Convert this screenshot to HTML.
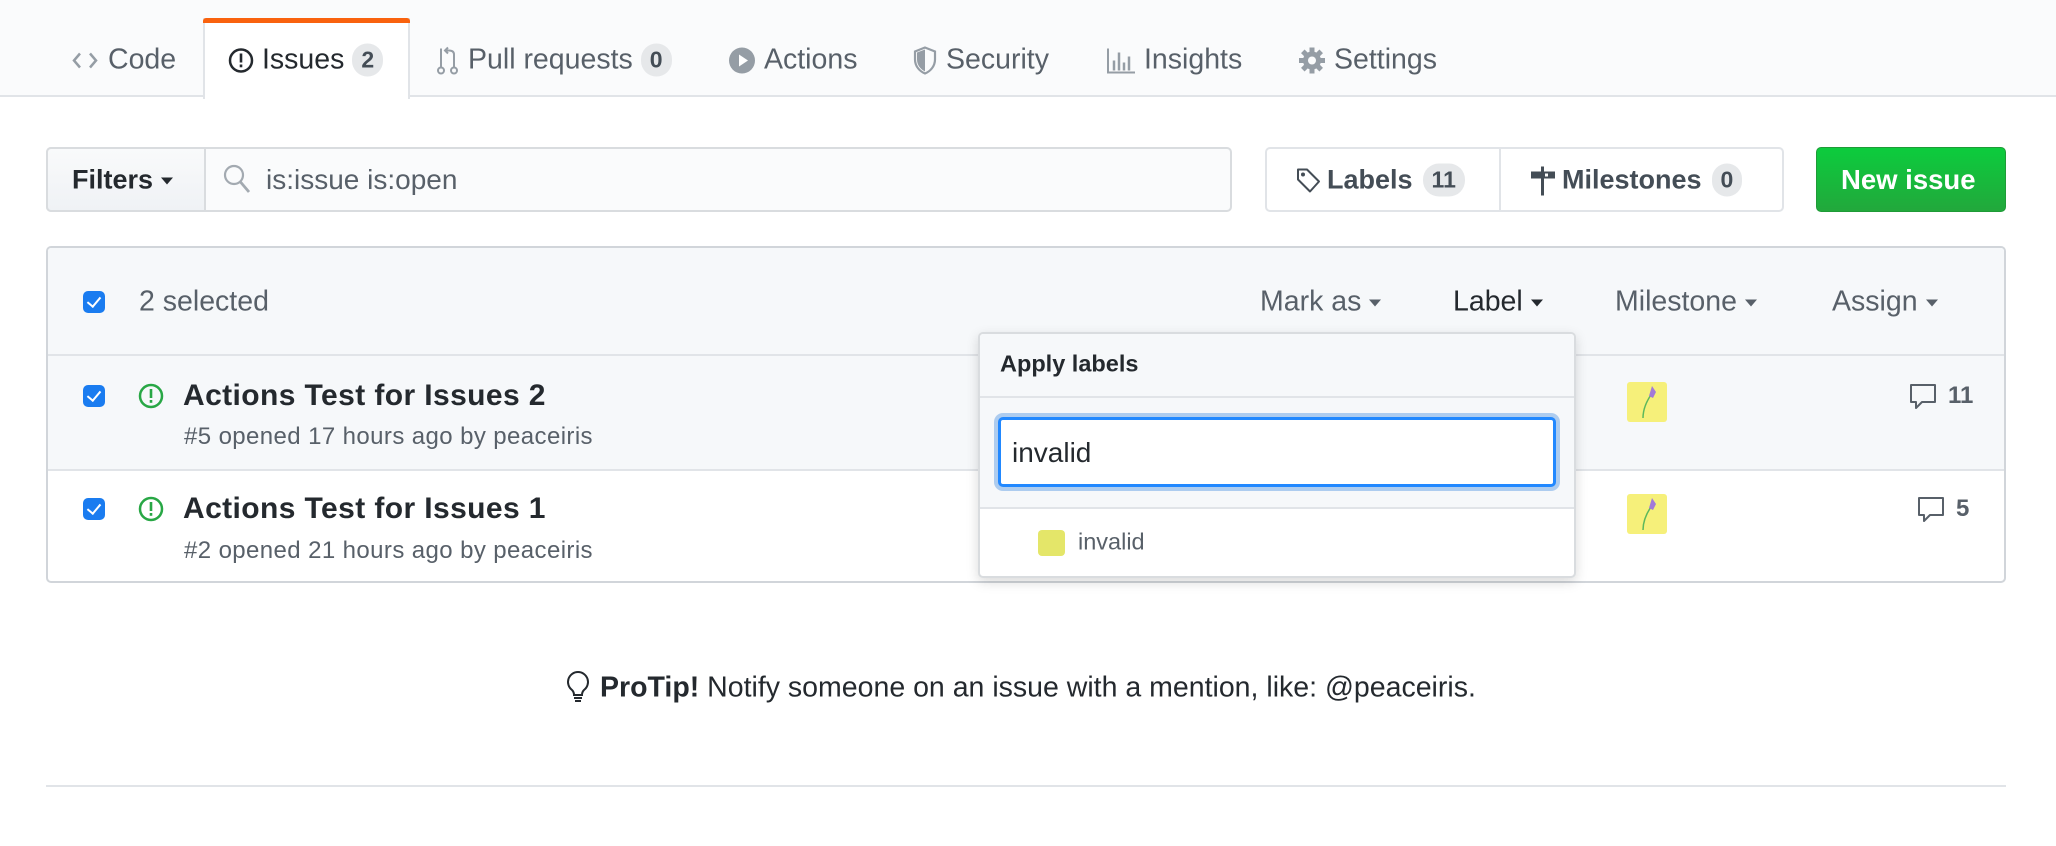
<!DOCTYPE html>
<html><head><meta charset="utf-8"><style>
*{box-sizing:border-box;margin:0;padding:0}
body{width:2056px;height:846px;background:#fff;font-family:"Liberation Sans",sans-serif;position:relative;overflow:hidden;color:#24292e}
.a{position:absolute;white-space:nowrap}
.tabbar{position:absolute;left:0;top:0;width:2056px;height:97px;background:#fafbfc;border-bottom:2px solid #e1e4e8}
.tab{position:absolute;top:60px;transform:translateY(-50%);font-size:28.5px;color:#586069;display:flex;align-items:center}
.cnt{display:inline-block;background:#e6e8ea;border-radius:16px;font-size:23px;font-weight:bold;color:#444d56;padding:3px 9px;margin-left:8px}
svg{display:block}
.mid{transform:translateY(-50%)}
.cb{position:absolute;width:22px;height:22px;background:#1a7cf0;border-radius:5px}
.cb:after{content:"";position:absolute;left:7px;top:3px;width:6px;height:11px;border:solid #fff;border-width:0 2.5px 2.5px 0;transform:rotate(40deg)}
.car{display:inline-block;border:6px solid transparent;border-top:7px solid #586069;border-bottom:0;margin-left:8px;vertical-align:middle}
</style></head><body>
<div class="tabbar"></div>
<div class="a" style="left:203px;top:18px;width:207px;height:81px;background:#fff;border:2px solid #e1e4e8;border-top:0;border-bottom:0"></div>
<div class="a" style="left:203px;top:18px;width:207px;height:5px;background:#f9620e;border-radius:3px 3px 0 0"></div>

<div class="tab" style="left:72px"><svg width="26" height="22" viewBox="0 0 26 22"><path d="M8 4 2 11l6 7M18 4l6 7-6 7" stroke="#959da5" stroke-width="2.5" fill="none"/></svg><span style="margin-left:10px;color:#586069">Code</span></div>
<div class="tab" style="left:228px;color:#24292e"><svg width="26" height="26" viewBox="0 0 26 26"><circle cx="13" cy="13" r="11" stroke="#24292e" stroke-width="2.5" fill="none"/><rect x="11.7" y="6" width="2.6" height="9" fill="#24292e"/><rect x="11.7" y="17" width="2.6" height="2.8" fill="#24292e"/></svg><span style="margin-left:8px">Issues</span><span class="cnt">2</span></div>
<div class="tab" style="left:436px"><svg width="24" height="30" viewBox="0 0 24 30"><circle cx="5" cy="25" r="3" stroke="#959da5" stroke-width="2" fill="none"/><path d="M5 3v19M18 22V9c0-3-2-4-5-4h-3M12 2 9 5l3 3" stroke="#959da5" stroke-width="2" fill="none"/><circle cx="18" cy="25" r="3" stroke="#959da5" stroke-width="2" fill="none"/></svg><span style="margin-left:8px">Pull requests</span><span class="cnt">0</span></div>
<div class="tab" style="left:728px"><svg width="28" height="28" viewBox="0 0 28 28"><circle cx="14" cy="14" r="13" fill="#959da5"/><path d="M11 8v12l9-6z" fill="#fff"/></svg><span style="margin-left:8px">Actions</span></div>
<div class="tab" style="left:912px"><svg width="26" height="30" viewBox="0 0 26 30"><path d="M13 2 3 6v8c0 7 5 12 10 14 5-2 10-7 10-14V6z" stroke="#959da5" stroke-width="2.2" fill="none"/><path d="M13 4v22c-4-2-8-6-8-12V7z" fill="#959da5"/></svg><span style="margin-left:8px">Security</span></div>
<div class="tab" style="left:1106px"><svg width="30" height="28" viewBox="0 0 30 28"><path d="M2 2v24h27" stroke="#959da5" stroke-width="2" fill="none"/><path d="M8 24V14M13 24V6M18 24V16M23 24V10" stroke="#959da5" stroke-width="2.5"/></svg><span style="margin-left:8px">Insights</span></div>
<div class="tab" style="left:1298px"><svg width="28" height="28" viewBox="0 0 28 28"><circle cx="14" cy="14" r="9" fill="#959da5"/><g stroke="#959da5" stroke-width="5"><path d="M14 1v26M1 14h26M4.8 4.8l18.4 18.4M23.2 4.8 4.8 23.2"/></g><circle cx="14" cy="14" r="4" fill="#fafbfc"/></svg><span style="margin-left:8px">Settings</span></div>

<!-- filters -->
<div class="a" style="left:46px;top:147px;width:1186px;height:65px;border:2px solid #d9dcdf;border-radius:5px;background:#fafbfc"></div>
<div class="a" style="left:46px;top:147px;width:160px;height:65px;border:2px solid #d9dcdf;border-radius:5px 0 0 5px;background:linear-gradient(#f9fafb,#eff2f5)"></div>
<div class="a mid" style="left:72px;top:180px;font-size:27px;font-weight:bold;color:#24292e">Filters<span class="car" style="border-top-color:#24292e"></span></div>
<svg class="a" style="left:222px;top:163px" width="30" height="32" viewBox="0 0 30 32"><circle cx="12" cy="12" r="9" stroke="#a3aab1" stroke-width="2.2" fill="none"/><path d="M18.5 19 27 29" stroke="#a3aab1" stroke-width="2.8"/></svg>
<div class="a mid" style="left:266px;top:180px;font-size:28px;color:#586069">is:issue is:open</div>

<div class="a" style="left:1265px;top:147px;width:519px;height:65px;border:2px solid #e1e4e8;border-radius:5px;background:#fff"></div>
<div class="a" style="left:1499px;top:148px;width:2px;height:63px;background:#e1e4e8"></div>
<div class="a mid" style="left:1295px;top:180px;font-size:27px;font-weight:bold;color:#444d56;display:flex;align-items:center"><svg width="26" height="28" viewBox="0 0 26 28"><path d="M3 3h9l12 12-9 10L3 13z" stroke="#444d56" stroke-width="2" fill="none" stroke-linejoin="round"/><circle cx="8" cy="8" r="2" fill="#444d56"/></svg><span style="margin-left:6px">Labels</span><span class="cnt" style="margin-left:10px">11</span></div>
<div class="a mid" style="left:1530px;top:180px;font-size:27px;font-weight:bold;color:#444d56;display:flex;align-items:center"><svg width="26" height="30" viewBox="0 0 26 30"><rect x="1" y="6" width="24" height="7" fill="#444d56"/><rect x="11" y="1" width="3" height="29" fill="#444d56"/><rect x="15" y="8" width="3" height="3" fill="#fff"/></svg><span style="margin-left:6px">Milestones</span><span class="cnt" style="margin-left:10px">0</span></div>

<div class="a" style="left:1816px;top:147px;width:190px;height:65px;border-radius:5px;background:linear-gradient(#0ccc3d,#22a83c);border:1px solid #1f9b37"></div>
<div class="a mid" style="left:1841px;top:180px;font-size:27.5px;font-weight:bold;color:#fff">New issue</div>

<!-- list box -->
<div class="a" style="left:46px;top:246px;width:1960px;height:337px;border:2px solid #d1d5da;border-radius:5px;background:#fff;overflow:hidden">
 <div style="height:108px;background:#f6f8fa;border-bottom:2px solid #e1e4e8"></div>
 <div style="height:115px;background:#f6f8fa;border-bottom:2px solid #e1e4e8"></div>
</div>
<div class="cb" style="left:83px;top:291px"></div>
<div class="a mid" style="left:139px;top:302px;font-size:28.5px;color:#586069">2 selected</div>
<div class="a mid" style="left:1260px;top:302px;font-size:28.5px;color:#586069">Mark as<span class="car"></span></div>
<div class="a mid" style="left:1453px;top:302px;font-size:28.5px;color:#24292e">Label<span class="car" style="border-top-color:#24292e"></span></div>
<div class="a mid" style="left:1615px;top:302px;font-size:28.5px;color:#586069">Milestone<span class="car"></span></div>
<div class="a mid" style="left:1832px;top:302px;font-size:28.5px;color:#586069">Assign<span class="car"></span></div>

<div class="cb" style="left:83px;top:385px"></div>
<svg class="a" style="left:138px;top:383px" width="26" height="26" viewBox="0 0 26 26"><circle cx="13" cy="13" r="11" stroke="#28a745" stroke-width="2.5" fill="none"/><rect x="11.7" y="6" width="2.6" height="9" fill="#28a745"/><rect x="11.7" y="17" width="2.6" height="2.8" fill="#28a745"/></svg>
<div class="a mid" style="left:183px;top:396px;font-size:30px;font-weight:bold;letter-spacing:.4px">Actions Test for Issues 2</div>
<div class="a mid" style="left:184px;top:437px;font-size:24px;letter-spacing:.4px;color:#586069">#5 opened 17 hours ago by peaceiris</div>

<div class="cb" style="left:83px;top:498px"></div>
<svg class="a" style="left:138px;top:496px" width="26" height="26" viewBox="0 0 26 26"><circle cx="13" cy="13" r="11" stroke="#28a745" stroke-width="2.5" fill="none"/><rect x="11.7" y="6" width="2.6" height="9" fill="#28a745"/><rect x="11.7" y="17" width="2.6" height="2.8" fill="#28a745"/></svg>
<div class="a mid" style="left:183px;top:509px;font-size:30px;font-weight:bold;letter-spacing:.4px">Actions Test for Issues 1</div>
<div class="a mid" style="left:184px;top:551px;font-size:24px;letter-spacing:.4px;color:#586069">#2 opened 21 hours ago by peaceiris</div>

<!-- avatars -->
<svg class="a" style="left:1627px;top:382px" width="40" height="40" viewBox="0 0 40 40"><rect width="40" height="40" rx="3" fill="#f6f07a"/><path d="M16 36c0-10 4-18 10-26" stroke="#5cb85c" stroke-width="1.5" fill="none"/><path d="M22 14l3-10 4 6-3 6z" fill="#a27ad9"/></svg>
<svg class="a" style="left:1627px;top:494px" width="40" height="40" viewBox="0 0 40 40"><rect width="40" height="40" rx="3" fill="#f6f07a"/><path d="M16 36c0-10 4-18 10-26" stroke="#5cb85c" stroke-width="1.5" fill="none"/><path d="M22 14l3-10 4 6-3 6z" fill="#a27ad9"/></svg>

<svg class="a" style="left:1909px;top:383px" width="28" height="28" viewBox="0 0 28 28"><path d="M2 2h24v17H13l-6 6v-6H2z" stroke="#586069" stroke-width="2" fill="none" stroke-linejoin="round"/></svg>
<div class="a mid" style="left:1948px;top:396px;font-size:24px;font-weight:bold;color:#586069">11</div>
<svg class="a" style="left:1917px;top:496px" width="28" height="28" viewBox="0 0 28 28"><path d="M2 2h24v17H13l-6 6v-6H2z" stroke="#586069" stroke-width="2" fill="none" stroke-linejoin="round"/></svg>
<div class="a mid" style="left:1956px;top:509px;font-size:24px;font-weight:bold;color:#586069">5</div>

<!-- dropdown -->
<div class="a" style="left:978px;top:332px;width:598px;height:246px;background:#fff;border:2px solid #d9dcdf;border-radius:5px;box-shadow:0 4px 12px rgba(0,0,0,.15);overflow:hidden">
 <div style="height:64px;background:#f6f8fa;border-bottom:2px solid #e1e4e8"></div>
 <div style="height:111px;background:#f6f8fa;border-bottom:2px solid #e1e4e8"></div>
</div>
<div class="a mid" style="left:1000px;top:364px;font-size:23.5px;font-weight:bold">Apply labels</div>
<div class="a" style="left:998px;top:417px;width:558px;height:70px;border:3px solid #2188ff;border-radius:5px;background:#fff;box-shadow:0 0 0 4px rgba(3,102,214,.3)"></div>
<div class="a mid" style="left:1012px;top:453px;font-size:28px">invalid</div>
<div class="a" style="left:1038px;top:530px;width:27px;height:26px;background:#e4e669;border-radius:4px"></div>
<div class="a mid" style="left:1078px;top:542px;font-size:23.5px;color:#586069">invalid</div>

<!-- protip -->
<svg class="a" style="left:566px;top:670px" width="24" height="34" viewBox="0 0 24 34"><path d="M12 2a10 10 0 0 0-6 18c1 1 2 3 2 5h8c0-2 1-4 2-5a10 10 0 0 0-6-18z" stroke="#24292e" stroke-width="2" fill="none"/><path d="M8 28h8M9 31h6" stroke="#24292e" stroke-width="2"/></svg>
<div class="a mid" style="left:600px;top:688px;font-size:28.5px;color:#24292e"><b>ProTip!</b> Notify someone on an issue with a mention, like: @peaceiris.</div>

<div class="a" style="left:46px;top:785px;width:1960px;height:2px;background:#e1e4e8"></div>
</body></html>
